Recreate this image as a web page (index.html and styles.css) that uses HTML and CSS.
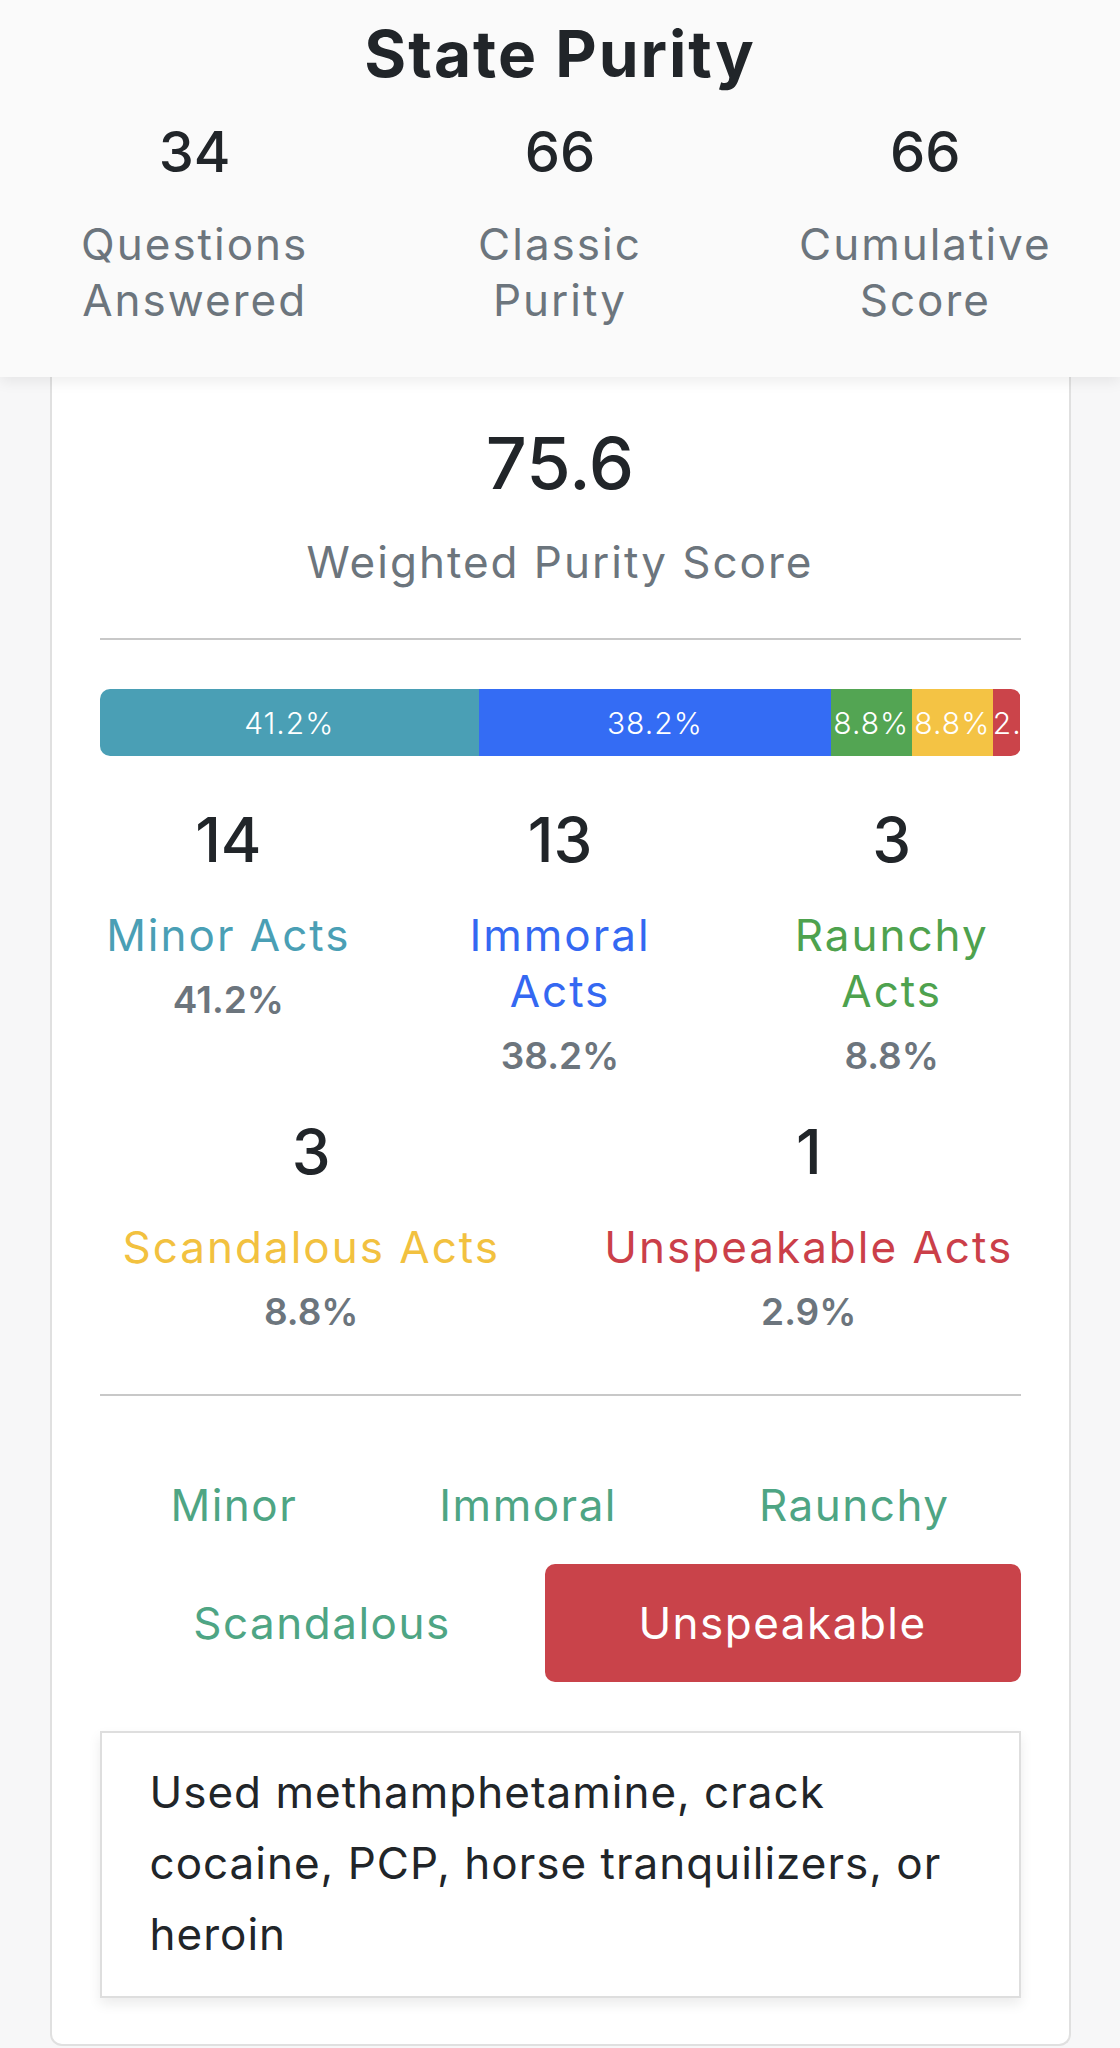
FILE: index.html
```html
<!DOCTYPE html>
<html lang="en">
<head>
    <meta charset="UTF-8">
    <meta name="viewport" content="width=device-width, initial-scale=1.0">
    <title>State Purity</title>
    <link rel="stylesheet" href="styles.css">
</head>
<body>
    <header class="summary">
        <h1>State Purity</h1>
        <div class="summary-stats">
            <div class="summary-item">
                <div class="summary-num">34</div>
                <div class="summary-label">Questions<br>Answered</div>
            </div>
            <div class="summary-item">
                <div class="summary-num">66</div>
                <div class="summary-label">Classic<br>Purity</div>
            </div>
            <div class="summary-item">
                <div class="summary-num">66</div>
                <div class="summary-label">Cumulative<br>Score</div>
            </div>
        </div>
    </header>

    <div class="card">
        <div class="score">75.6</div>
        <div class="score-label">Weighted Purity Score</div>

        <hr class="divider">

        <div class="progress">
            <div class="progress-bar minor" style="width: 41.2%">41.2%</div>
            <div class="progress-bar immoral" style="width: 38.2%">38.2%</div>
            <div class="progress-bar raunchy" style="width: 8.8%">8.8%</div>
            <div class="progress-bar scandalous" style="width: 8.8%">8.8%</div>
            <div class="progress-bar unspeakable" style="width: 2.9%">2.9%</div>
        </div>

        <div class="acts">
            <div class="acts-row">
                <div class="act">
                    <div class="act-count">14</div>
                    <div class="act-name minor-text">Minor Acts</div>
                    <div class="act-pct">41.2%</div>
                </div>
                <div class="act">
                    <div class="act-count">13</div>
                    <div class="act-name immoral-text">Immoral<br>Acts</div>
                    <div class="act-pct">38.2%</div>
                </div>
                <div class="act">
                    <div class="act-count">3</div>
                    <div class="act-name raunchy-text">Raunchy<br>Acts</div>
                    <div class="act-pct">8.8%</div>
                </div>
            </div>
            <div class="acts-row">
                <div class="act">
                    <div class="act-count">3</div>
                    <div class="act-name scandalous-text">Scandalous Acts</div>
                    <div class="act-pct">8.8%</div>
                </div>
                <div class="act">
                    <div class="act-count">1</div>
                    <div class="act-name unspeakable-text">Unspeakable Acts</div>
                    <div class="act-pct">2.9%</div>
                </div>
            </div>
        </div>

        <hr class="divider divider-low">

        <nav class="tabs">
            <a class="tab">Minor</a>
            <a class="tab">Immoral</a>
            <a class="tab">Raunchy</a>
            <a class="tab">Scandalous</a>
            <a class="tab active">Unspeakable</a>
        </nav>

        <div class="question">
            Used methamphetamine, crack cocaine, PCP, horse tranquilizers, or heroin
        </div>
    </div>
</body>
</html>
```

FILE: styles.css
```css
body {
    margin: 0;
    padding: 0;
    font-family: Inter, "Open Sans", sans-serif;
    background-color: #f7f7f8;
    color: #212529;
}

.summary {
    position: relative;
    z-index: 2;
    background-color: #fafafa;
    box-shadow: 0 4px 14px rgba(0, 0, 0, 0.08);
    padding: 16px 12px 49px;
    text-align: center;
}

.summary h1 {
    margin: 0;
    font-size: 64px;
    font-weight: 700;
    line-height: 1.2;
    letter-spacing: 2px;
}

.summary-stats {
    display: flex;
    margin-top: 26px;
}

.summary-item {
    flex: 1;
}

.summary-num {
    font-size: 56px;
    font-weight: 500;
    line-height: 1.2;
}

.summary-label {
    margin-top: 30px;
    font-size: 44px;
    line-height: 56px;
    letter-spacing: 2px;
    color: #6c757d;
}

.card {
    width: 1021px;
    margin: 0 auto;
    box-sizing: border-box;
    padding: 43px 48px 46px;
    background-color: #fff;
    border: 2px solid #e0e0e0;
    border-top: none;
    border-radius: 0 0 12px 12px;
}

.score {
    text-align: center;
    font-size: 72px;
    font-weight: 500;
    line-height: 1.2;
}

.score-label {
    margin-top: 23px;
    text-align: center;
    font-size: 44px;
    line-height: 66px;
    letter-spacing: 2px;
    color: #6c757d;
}

.divider {
    margin: 43px 0 0;
    border: none;
    border-top: 2px solid #c8c8c8;
}

.divider-low {
    margin-top: 55px;
}

.progress {
    display: flex;
    height: 67px;
    margin-top: 49px;
    border-radius: 10px;
    overflow: hidden;
}

.progress-bar {
    display: flex;
    flex-direction: column;
    justify-content: center;
    overflow: hidden;
    white-space: nowrap;
    text-align: center;
    color: #fff;
    font-size: 30px;
    font-weight: 300;
    letter-spacing: 1px;
}

.minor { background-color: #4a9fb5; }
.immoral { background-color: #346cf4; }
.raunchy { background-color: #53a553; }
.scandalous { background-color: #f4c344; }
.unspeakable { background-color: #cb444a; }

.minor-text { color: #4a9fb5; }
.immoral-text { color: #3468f2; }
.raunchy-text { color: #4ea24e; }
.scandalous-text { color: #f2c13f; }
.unspeakable-text { color: #cb3f49; }

.acts {
    margin: 47px -37px 0;
}

.acts-row {
    display: flex;
}

.acts-row + .acts-row {
    margin-top: 32px;
}

.act {
    flex: 1;
    text-align: center;
}

.act-count {
    font-size: 62px;
    font-weight: 500;
    line-height: 1.2;
}

.act-name {
    margin-top: 29px;
    font-size: 44px;
    line-height: 56px;
    letter-spacing: 2px;
}

.act-pct {
    margin-top: 9px;
    font-size: 37px;
    font-weight: 600;
    line-height: 1.5;
    color: #6c757d;
}

.tabs {
    display: flex;
    flex-wrap: wrap;
    margin-top: 50px;
}

.tab {
    flex: 1 1 auto;
    padding: 26px 32px;
    font-size: 44px;
    line-height: 66px;
    letter-spacing: 1.5px;
    text-align: center;
    color: #4ea584;
    border-radius: 10px;
    cursor: pointer;
}

.tab.active {
    background-color: #c9434a;
    color: #fff;
}

.question {
    margin-top: 49px;
    padding: 24px 48px 26px;
    border: 2px solid #dedede;
    box-shadow: 0 6px 12px rgba(0, 0, 0, 0.08);
    font-size: 44px;
    line-height: 71px;
    letter-spacing: 1px;
}
```
